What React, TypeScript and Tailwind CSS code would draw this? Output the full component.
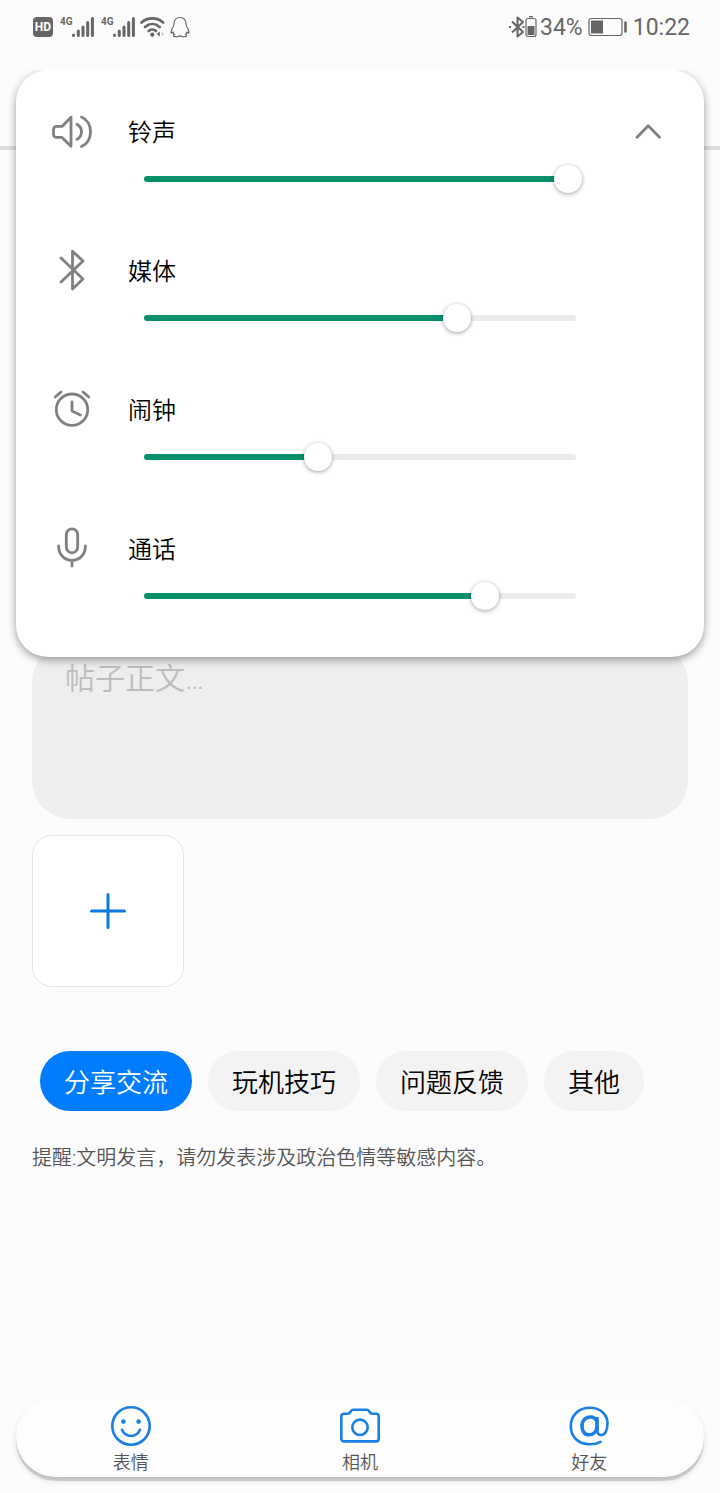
import { useState, type ReactNode } from "react";

const STEPS = 15;

function LineIcon({ children }: { children: ReactNode }) {
  return (
    <svg
      viewBox="0 0 48 48"
      className="h-12 w-12 text-[#808080]"
      fill="none"
      stroke="currentColor"
      strokeWidth="2.8"
      strokeLinecap="round"
      strokeLinejoin="round"
      aria-hidden="true"
    >
      {children}
    </svg>
  );
}

const channels = [
  {
    id: "ring",
    label: "铃声",
    level: 15,
    icon: (
      <LineIcon>
        <path d="M14 18.4H8.500a3 3 0 0 0-3 3v5a3 3 0 0 0 3 3H14l9 8.800V9.200z" />
        <path d="M29 16.200c6 3.600 6 11.600 0 15.200" />
        <path d="M33.500 9c12 5 12 24.500 0 29.500" />
      </LineIcon>
    ),
  },
  {
    id: "media",
    label: "媒体",
    level: 11,
    icon: (
      <LineIcon>
        <path d="M13 11l22 21-10.500 10V4.200L35 14 13 35" />
      </LineIcon>
    ),
  },
  {
    id: "alarm",
    label: "闹钟",
    level: 6,
    icon: (
      <LineIcon>
        <circle cx="24" cy="23.700" r="15.700" />
        <path d="M24 15.800V25l8.300 4M13 6l-5.800 5M35 6l5.800 5" />
      </LineIcon>
    ),
  },
  {
    id: "call",
    label: "通话",
    level: 12,
    icon: (
      <LineIcon>
        <rect x="18.300" y="3.800" width="11.400" height="24" rx="5.700" />
        <path d="M10.700 21v1a13.300 13.300 0 0 0 26.600 0v-1M24 35.500V41" />
      </LineIcon>
    ),
  },
];

const topics = ["分享交流", "玩机技巧", "问题反馈", "其他"];

const tools = [
  {
    label: "表情",
    icon: (
      <>
        <circle cx="20" cy="20" r="18.700" />
        <path d="M11 23.800c3.500 8.200 14.500 8.200 18 0" />
        <circle cx="12.400" cy="15.600" r="2.300" fill="currentColor" stroke="none" />
        <circle cx="27.600" cy="15.600" r="2.300" fill="currentColor" stroke="none" />
      </>
    ),
  },
  {
    label: "相机",
    icon: (
      <>
        <path d="M4 7.700h4c2.500 0 2.500-4 5-4h14c2.500 0 2.500 4 5 4h4a2.700 2.700 0 0 1 2.700 2.700v22.300a2.700 2.700 0 0 1-2.700 2.700H4a2.700 2.700 0 0 1-2.700-2.700V10.400A2.700 2.700 0 0 1 4 7.700z" />
        <circle cx="20" cy="21.300" r="7.700" />
      </>
    ),
  },
  {
    label: "好友",
    icon: (
      <>
        <path d="M31.500 35.800C28 37.600 24.500 38.200 20.500 38.200 9.500 38.200 1.800 31 1.800 20.200 1.800 9.500 9.500 1.800 20.800 1.800c10.500 0 17.700 6.500 17.700 15.800 0 6.800-2.600 11.400-6 11.400-2.900 0-4.200-1.600-4.200-4.600" />
        <path d="M28 11v14" strokeWidth="3.600" strokeLinecap="butt" />
        <path d="M28 15.500c-1.200-3-3.400-4.500-6.300-4.500-5.200 0-8.700 3.800-8.700 9.300 0 5.200 2.700 8.500 7 8.500 4.200 0 7.300-3 8-7.300" strokeWidth="3.600" />
      </>
    ),
  },
];

function Signal() {
  return (
    <div className="flex">
      <span className="w-3 text-[10px] leading-3 font-bold">4G</span>
      <svg viewBox="0 0 22 22" className="h-[22px] w-[22px]" fill="none" stroke="currentColor" strokeWidth="3" strokeLinecap="round" aria-hidden="true">
        <path d="M1.500 19v.5M6.300 15v4.500M11 11v8.500M15.700 6.500v13M20.400 2.500v17" />
      </svg>
    </div>
  );
}

function StatusBar() {
  return (
    <div className="flex h-[54px] items-center justify-between pr-[30px] pl-[33px] text-[#666666]">
      <div className="flex items-center">
        <span className="mr-[7px] flex h-5 w-5 items-center justify-center rounded bg-[#666666] text-[12px] font-bold text-white">
          HD
        </span>
        <Signal />
        <div className="ml-[7px]">
          <Signal />
        </div>
        <svg viewBox="0 0 26 22" className="ml-[5px] h-[22px] w-[26px]" fill="none" stroke="currentColor" strokeWidth="2.600" strokeLinecap="round" aria-hidden="true">
          <path d="M1.500 6.500c6-5.500 15.600-5.500 21.600 0M5 11c4.500-4 10.200-4 14.700 0M8.700 15c2-2 5.200-2 7.200 0" />
          <circle cx="12.300" cy="18.700" r="2.100" fill="currentColor" stroke="none" />
          <path d="M19.800 15.500v5l-3-2.500z" fill="currentColor" stroke="none" />
          <path d="M21.500 15.500v5l3-2.500z" fill="#cccccc" stroke="none" />
        </svg>
        <svg viewBox="0 0 20 22" className="ml-1 h-[22px] w-5" fill="none" stroke="currentColor" strokeWidth="1.200" strokeLinejoin="round" aria-hidden="true">
          <path d="M10 1.500c-4 0-6 2.800-6 6.300 0 1.200-.2 2-.8 3C1.800 13 .8 14.800 1 16.500c.1 1.200 1 .8 2-.7.300 1.300.8 2 1.500 2.700-1 .5-1.300 1.200-.8 1.700 1 .8 4.800.8 6.300-.5 1.500 1.300 5.300 1.300 6.300.500.5-.5.200-1.200-.8-1.700.7-.7 1.200-1.400 1.500-2.700 1 1.500 1.900 1.900 2 .7.200-1.700-.8-3.500-2.200-5.700-.6-1-.8-1.800-.8-3 0-3.500-2-6.300-6-6.300z" />
        </svg>
      </div>
      <div className="flex items-center text-[23px] leading-7">
        <svg viewBox="0 0 16 22" className="h-[22px] w-4" fill="none" stroke="currentColor" strokeWidth="2" strokeLinejoin="round" aria-hidden="true">
          <path d="M3 5.500l11 10.500-5.500 4.500v-19L14 6 3 16.500" />
          <path d="M0 10h2v2H0zM13.500 10h2v2h-2z" fill="currentColor" stroke="none" />
        </svg>
        <svg viewBox="0 0 12 22" className="mr-[3px] h-[22px] w-3" fill="none" stroke="currentColor" aria-hidden="true">
          <rect x="1" y="2.500" width="10" height="18" rx="2" strokeWidth="1.200" />
          <path d="M4 .7h4" strokeWidth="1.400" />
          <rect x="2.500" y="10" width="7" height="9" fill="currentColor" stroke="none" />
        </svg>
        <span className="pt-0.5">34%</span>
        <svg viewBox="0 0 40 20" className="mx-[5px] h-5 w-10" fill="none" stroke="currentColor" aria-hidden="true">
          <rect x="1" y="1.500" width="33" height="17" rx="2.500" strokeWidth="1.200" />
          <rect x="3" y="3.500" width="12" height="13" fill="currentColor" stroke="none" />
          <path d="M37.500 5.500v9" strokeWidth="2.600" strokeLinecap="round" />
        </svg>
        <span className="pt-0.5">10:22</span>
      </div>
    </div>
  );
}

function VolumeSlider({ id, initial }: { id: string; initial: number }) {
  const [value, setValue] = useState(initial);

  return (
    <div className="grid items-center px-[10px]">
      <div className="col-start-1 row-start-1 mx-[6px] h-[6px] overflow-hidden rounded-full bg-[#ebebeb]">
        <div
          className="h-full bg-[#079069]"
          style={{ width: `calc(8px + (100% - 16px) * ${value / STEPS})` }}
        />
      </div>
      <input
        id={id}
        type="range"
        min={0}
        max={STEPS}
        value={value}
        onChange={(e) => setValue(Number(e.target.value))}
        className="z-10 col-start-1 row-start-1 h-7 w-full cursor-pointer appearance-none bg-transparent [&::-webkit-slider-thumb]:h-7 [&::-webkit-slider-thumb]:w-7 [&::-webkit-slider-thumb]:appearance-none [&::-webkit-slider-thumb]:rounded-full [&::-webkit-slider-thumb]:bg-white [&::-webkit-slider-thumb]:shadow-[0_1px_4px_rgba(0,0,0,0.38)]"
      />
    </div>
  );
}

function VolumePanel() {
  return (
    <section className="absolute inset-x-4 top-[70px] z-20 flex flex-col gap-[54px] rounded-[32px] bg-white pt-[38px] pb-[47px] shadow-[0_3px_8px_rgba(0,0,0,0.38)] [clip-path:inset(0_-20px_-24px_-20px)]">
      {channels.map((c, i) => (
        <div key={c.id} className="grid grid-cols-[112px_1fr_112px] gap-y-[7px]">
          <div className="flex items-start justify-center">{c.icon}</div>
          <label htmlFor={c.id} className="text-2xl leading-[50px] text-black">
            {c.label}
          </label>
          {i === 0 && (
            <button type="button" aria-label="收起" className="flex items-start justify-center">
              <LineIcon>
                <path d="M13 29.300l11.200-11.500L35.500 29.300" />
              </LineIcon>
            </button>
          )}
          <div className="col-start-2">
            <VolumeSlider id={c.id} initial={c.level} />
          </div>
        </div>
      ))}
    </section>
  );
}

export default function App() {
  const [topic, setTopic] = useState(topics[0]);

  return (
    <div className="relative flex min-h-screen flex-col bg-[#fcfcfc] font-[Roboto,'Noto_Sans_CJK_SC',sans-serif]">
      <header className="h-[150px] border-b-4 border-[#dedede]">
        <StatusBar />
      </header>

      <div className="flex flex-1 flex-col font-[350]">
        <VolumePanel />

        <main className="flex flex-col items-start px-8 pt-[494px]">
          <textarea
            aria-label="帖子正文"
            placeholder="帖子正文…"
            className="h-[175px] w-full resize-none rounded-[38px] bg-[#eeeeee] px-[33px] py-[17px] text-[30px] leading-9 placeholder:text-[#bdbdbd]"
          />
          <button
            type="button"
            aria-label="添加图片"
            className="mt-4 flex h-[152px] w-[152px] items-center justify-center rounded-[20px] border border-[#e4e4e4] bg-white"
          >
            <svg viewBox="0 0 40 40" className="h-10 w-10 text-[#0b7be3]" stroke="currentColor" strokeWidth="3" strokeLinecap="round" aria-hidden="true">
              <path d="M20 3.500v33M3.500 20h33" />
            </svg>
          </button>

          <div className="mt-16 ml-2 flex flex-wrap gap-4">
            {topics.map((t) => (
              <button
                key={t}
                type="button"
                onClick={() => setTopic(t)}
                className={`h-[60px] rounded-full px-6 pt-1 text-[26px] ${
                  t === topic ? "bg-[#007dff] text-white" : "bg-[#f3f3f3] text-black"
                }`}
              >
                {t}
              </button>
            ))}
          </div>

          <p className="mt-[33px] text-xl leading-7 text-[#555555]">
            提醒:文明发言，请勿发表涉及政治色情等敏感内容。
          </p>
        </main>

        <nav className="mx-4 mt-auto mb-4 grid grid-cols-3 rounded-[40px] bg-[#fdfdfd] shadow-[0_4px_1px_rgba(0,0,0,0.14),0_4px_6px_rgba(0,0,0,0.12)]">
          {tools.map((tool) => (
            <button key={tool.label} type="button" className="flex flex-col items-center gap-[5px] pt-[9px] pb-[2px] text-[#555555]">
              <svg viewBox="0 0 40 40" className="h-10 w-10 text-[#1a7fe2]" fill="none" stroke="currentColor" strokeWidth="2.600" strokeLinecap="round" aria-hidden="true">
                {tool.icon}
              </svg>
              <span className="text-lg leading-6">{tool.label}</span>
            </button>
          ))}
        </nav>
      </div>
    </div>
  );
}
